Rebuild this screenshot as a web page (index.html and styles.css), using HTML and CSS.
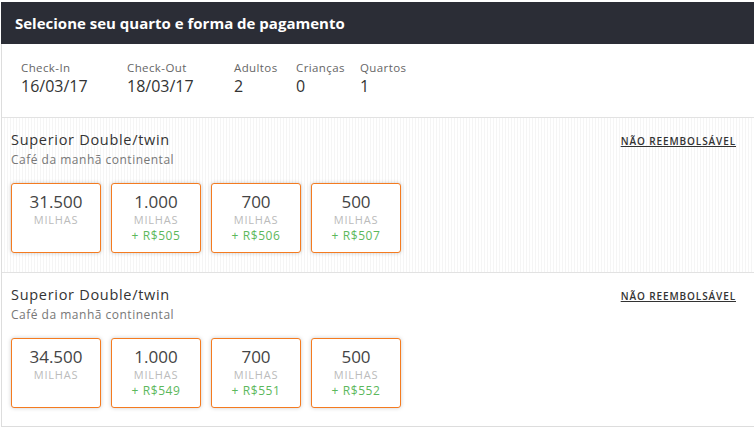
FILE: index.html
```html
<!DOCTYPE html>
<html>
  <head>
    <title>Selecione seu quarto</title>
    <link rel="stylesheet" href="styles.css">
  </head>
  <body>
    <div class="booking">
      <header>
        <h1>Selecione seu quarto e forma de pagamento</h1>
      </header>

      <!-- Stay summary -->
      <div class="summary">
        <div class="summary-item">
          <span class="label">Check-In</span>
          <span class="value">16/03/17</span>
        </div>
        <div class="summary-item">
          <span class="label">Check-Out</span>
          <span class="value">18/03/17</span>
        </div>
        <div class="summary-item">
          <span class="label">Adultos</span>
          <span class="value">2</span>
        </div>
        <div class="summary-item">
          <span class="label">Crianças</span>
          <span class="value">0</span>
        </div>
        <div class="summary-item">
          <span class="label">Quartos</span>
          <span class="value">1</span>
        </div>
      </div>

      <!-- Room 1 -->
      <div class="room room-striped">
        <div class="room-head">
          <div>
            <h2>Superior Double/twin</h2>
            <p class="meal">Café da manhã continental</p>
          </div>
          <a class="refund" href="#">NÃO REEMBOLSÁVEL</a>
        </div>
        <div class="options">
          <div class="option">
            <span class="miles">31.500</span>
            <span class="unit">MILHAS</span>
          </div>
          <div class="option">
            <span class="miles">1.000</span>
            <span class="unit">MILHAS</span>
            <span class="cash">+ R$505</span>
          </div>
          <div class="option">
            <span class="miles">700</span>
            <span class="unit">MILHAS</span>
            <span class="cash">+ R$506</span>
          </div>
          <div class="option">
            <span class="miles">500</span>
            <span class="unit">MILHAS</span>
            <span class="cash">+ R$507</span>
          </div>
        </div>
      </div>

      <!-- Room 2 -->
      <div class="room">
        <div class="room-head">
          <div>
            <h2>Superior Double/twin</h2>
            <p class="meal">Café da manhã continental</p>
          </div>
          <a class="refund" href="#">NÃO REEMBOLSÁVEL</a>
        </div>
        <div class="options">
          <div class="option">
            <span class="miles">34.500</span>
            <span class="unit">MILHAS</span>
          </div>
          <div class="option">
            <span class="miles">1.000</span>
            <span class="unit">MILHAS</span>
            <span class="cash">+ R$549</span>
          </div>
          <div class="option">
            <span class="miles">700</span>
            <span class="unit">MILHAS</span>
            <span class="cash">+ R$551</span>
          </div>
          <div class="option">
            <span class="miles">500</span>
            <span class="unit">MILHAS</span>
            <span class="cash">+ R$552</span>
          </div>
        </div>
      </div>
    </div>
  </body>
</html>
```

FILE: styles.css
```css
body {
  margin: 0;
  padding: 0;
  font-family: "Open Sans", Arial, sans-serif;
  background-color: #ffffff;
  color: #333333;
}
.booking {
  margin-top: 2px;
  width: 752px;
  margin-left: 1px;
  border-left: 1px solid #dddddd;
  border-right: 1px solid #dddddd;
  border-bottom: 1px solid #dddddd;
  height: 424px;
}
header {
  background-color: #2b2d36;
  height: 42px;
  margin-left: -1px;
  display: flex;
  align-items: center;
  padding: 0 14px;
}
h1 {
  margin: 0;
  color: #ffffff;
  font-size: 15px;
  font-weight: 700;
}
.summary {
  display: grid;
  grid-template-columns: 106px 107px 62px 64px auto;
  padding: 17px 19px 0;
  height: 56px;
  border-bottom: 1px solid #e2e2e2;
}
.summary-item {
  display: flex;
  flex-direction: column;
}
.label {
  font-size: 11.5px;
  letter-spacing: 0.4px;
  color: #666666;
  line-height: 14px;
}
.value {
  font-size: 16px;
  color: #333333;
  line-height: 22px;
}
.room {
  height: 154px;
  padding: 0 9px;
  border-bottom: 1px solid #e2e2e2;
}
.room:last-child {
  border-bottom: none;
}
.room-striped {
  background-color: #fcfcfc;
  background-image: repeating-linear-gradient(90deg, #ffffff 0, #ffffff 2px, #f5f5f5 2px, #f5f5f5 3px);
}
.room-head {
  display: flex;
  justify-content: space-between;
  align-items: flex-start;
  padding-top: 12px;
}
h2 {
  margin: 0;
  font-size: 14.5px;
  font-weight: 500;
  letter-spacing: 0.7px;
  line-height: 20px;
  color: #333333;
}
.meal {
  margin: 0;
  font-size: 12px;
  letter-spacing: 0.5px;
  line-height: 20px;
  color: #777777;
}
.refund {
  font-size: 10px;
  font-weight: 600;
  color: #333333;
  letter-spacing: 0.9px;
  margin-top: 4px;
  margin-right: 9px;
}
.options {
  display: flex;
  gap: 10px;
  margin-top: 13px;
}
.option {
  width: 90px;
  height: 70px;
  border: 1px solid #f47b20;
  border-radius: 3px;
  background-color: #ffffff;
  box-shadow: 0 0 4px rgba(0, 0, 0, 0.2);
  display: flex;
  flex-direction: column;
  align-items: center;
  padding-top: 8px;
  box-sizing: border-box;
}
.miles {
  font-size: 17px;
  color: #444444;
  line-height: 20px;
}
.unit {
  font-size: 11px;
  letter-spacing: 0.8px;
  color: #bbbbbb;
  line-height: 16px;
}
.cash {
  font-size: 12px;
  letter-spacing: 0.6px;
  color: #5cb85c;
  line-height: 16px;
}
```
